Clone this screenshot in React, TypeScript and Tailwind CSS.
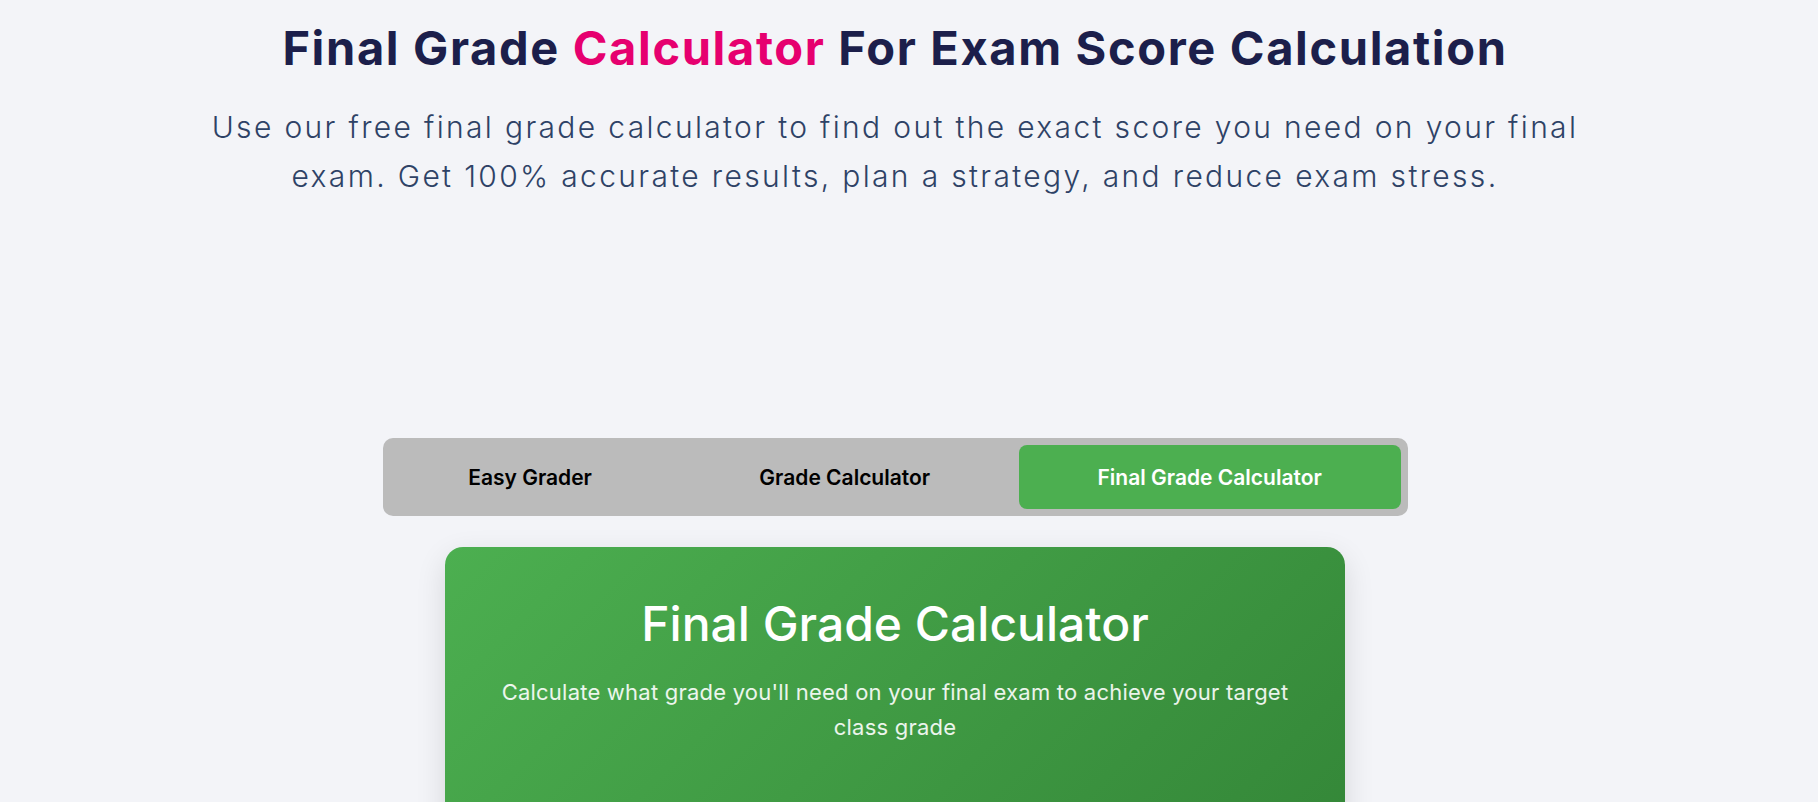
import React from "react";

const tabs = ["Easy Grader", "Grade Calculator", "Final Grade Calculator"];

export default function App() {
  const active = 2;

  return (
    <div className="min-h-screen bg-[#f3f4f8] font-['Inter','Noto_Sans',sans-serif]">
      <div className="w-[1790px] flex flex-col items-center pt-[20px] pb-[40px]">
        {/* Hero */}
        <h1 className="text-[47px] leading-[1.2] font-bold tracking-[0.035em] text-[#1c1f4b]">
          Final Grade <span className="text-[#e6006f]">Calculator</span> For Exam Score Calculation
        </h1>
        <p className="mt-[27px] max-w-[1400px] text-center text-[30px] leading-[49px] font-light tracking-[0.078em] text-[#2e4266]">
          Use our free final grade calculator to find out the exact score you need on your final
          exam. Get 100% accurate results, plan a strategy, and reduce exam stress.
        </p>

        {/* Tabs */}
        <div className="mt-[237px] w-[1025px] h-[78px] p-[7px] flex gap-[10px] rounded-[10px] bg-[#bbbbbb]">
          {tabs.map((t, i) => (
            <button
              key={t}
              className={
                i === active
                  ? "flex-auto rounded-[8px] bg-[#4caf50] text-white text-[21px] font-semibold"
                  : "flex-auto rounded-[8px] text-black text-[21px] font-semibold"
              }
            >
              {t}
            </button>
          ))}
        </div>

        {/* Calculator card */}
        <div className="mt-[31px] w-[900px] h-[600px] rounded-[18px] bg-linear-135 from-[#4caf50] to-[#2e7d32] px-[48px] pt-[48px] text-center shadow-[0_10px_30px_rgba(0,0,0,0.12)]">
          <h2 className="text-[48px] leading-[1.2] font-medium text-white">Final Grade Calculator</h2>
          <p className="mt-[22px] text-[22px] leading-[35px] tracking-[0.01em] text-white/90">
            Calculate what grade you'll need on your final exam to achieve your target class grade
          </p>
        </div>
      </div>
    </div>
  );
}
